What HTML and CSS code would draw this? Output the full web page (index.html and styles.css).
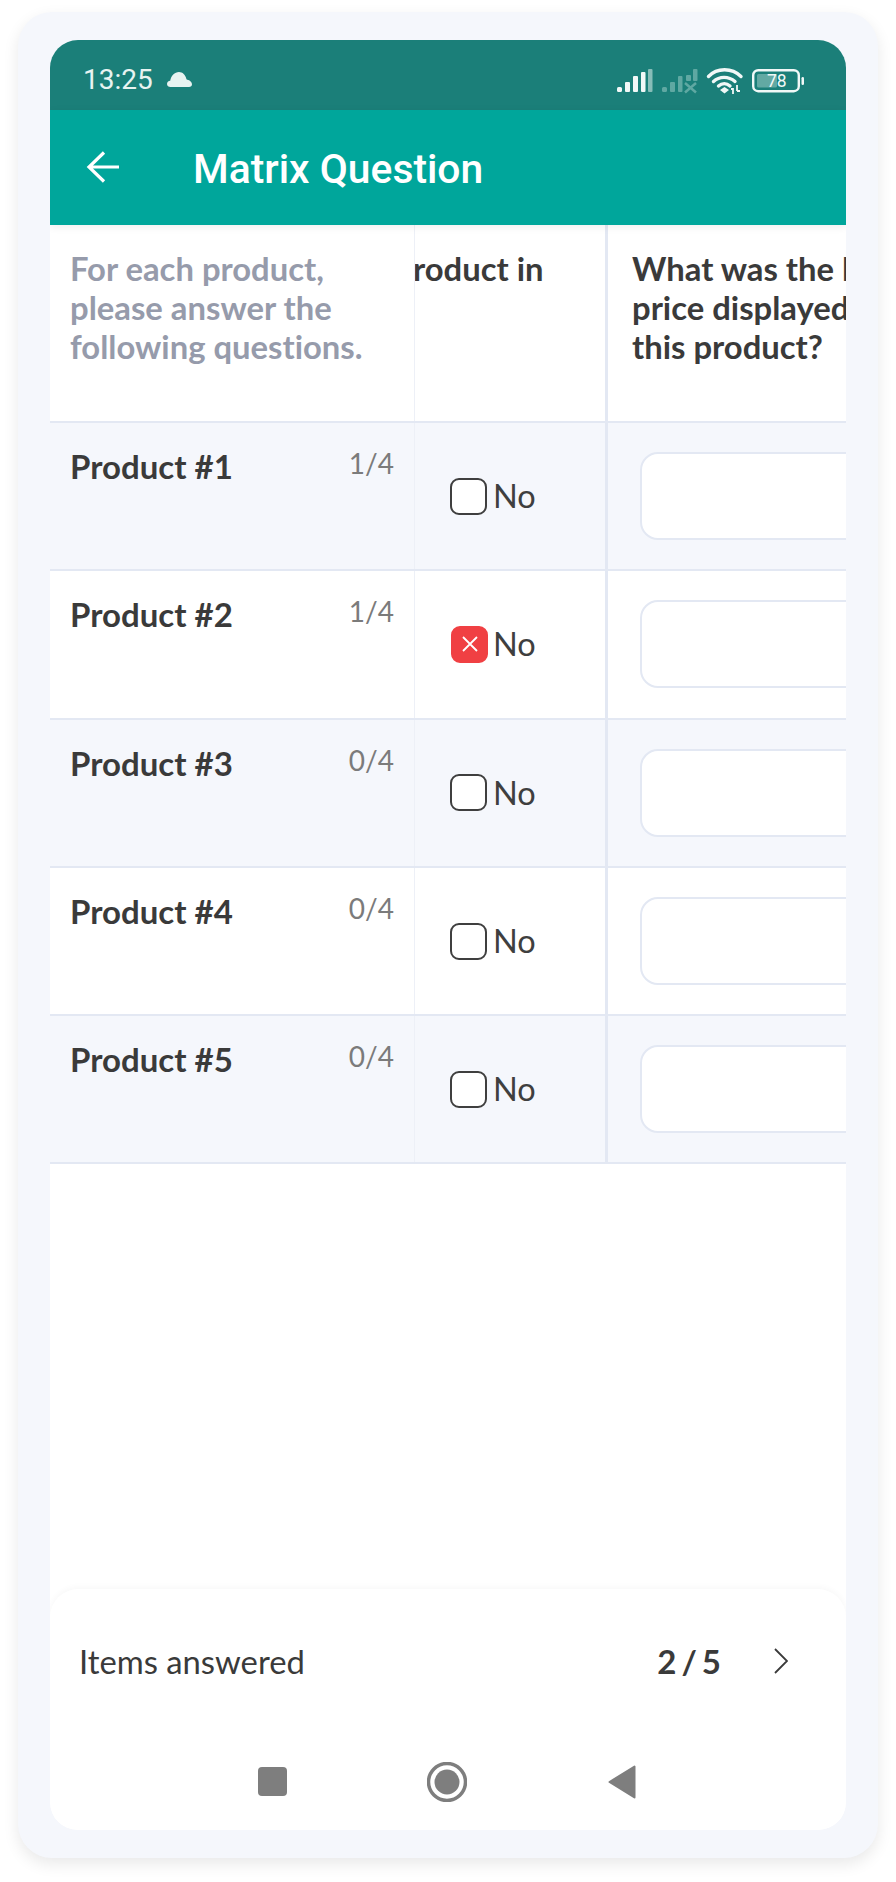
FILE: index.html
```html
<!DOCTYPE html>
<html lang="en">
<head>
<meta charset="utf-8">
<title>Matrix Question</title>
<link rel="stylesheet" href="styles.css">
</head>
<body>
<div class="phone">
  <div class="screen">
    <div class="status">
      <span class="time">13:25</span>
      <svg class="cloud" viewBox="0 0 25 15"><path d="M3.5 15C1.5 15 0 13.6 0 11.900 0 10.200 1.300 9 3.200 8.800 4 3.800 7.600 0 12 0c3.500 0 6.500 2.800 7.400 7 .1.500.4.800.9.800 2.700.3 4.700 2.800 4.700 4.400 0 1.700-1.300 2.800-3 2.800z" fill="#e8f3f1"/></svg>
      <svg class="sysicons" viewBox="0 0 187 28">
        <g fill="#f1f8f7">
          <rect x="0" y="21" width="5" height="5" rx="1.500"/><rect x="8" y="16" width="5" height="10" rx="1"/><rect x="16" y="10" width="5" height="16" rx="1"/><rect x="24" y="6" width="4.500" height="20" rx="1"/>
        </g>
        <rect x="31" y="3" width="4.500" height="23" rx="1" fill="#86bdb8"/>
        <g fill="#5fa8a2">
          <rect x="45" y="21" width="5" height="5" rx="1.500"/><rect x="53" y="16" width="5" height="10" rx="1"/><rect x="61" y="10" width="4.500" height="16" rx="1"/><rect x="69" y="9" width="5" height="6" rx="1"/><rect x="76" y="3" width="4.500" height="12" rx="1"/>
        </g>
        <path d="M68 17l11 9.500M79 17l-11 9.500" stroke="#5fa8a2" stroke-width="2.500" fill="none"/>
        <g fill="none" stroke="#f1f8f7" stroke-width="3.400" stroke-linecap="round">
          <path d="M91.500 10.500C100 1.500 115 1.500 124 10.500"/>
          <path d="M96.500 15.500c6-5.500 15-5.500 21.500 0"/>
          <path d="M101.500 20c3.500-3 8-3 11.500 0"/>
        </g>
        <path d="M103 24l4.500-3 4.500 3-4.500 3.500z" fill="#f1f8f7"/>
        <path d="M116 22v6M120 19v6M114 23h2M120 25h3" stroke="#f1f8f7" stroke-width="1.800" fill="none"/>
        <rect x="136.200" y="4.200" width="45.600" height="21" rx="5" fill="none" stroke="#f1f8f7" stroke-width="2.400"/>
        <rect x="140" y="8" width="20" height="13.500" rx="1.500" fill="#62a9a3"/>
        <text x="150" y="21" class="battery">78</text>
        <rect x="184.500" y="11" width="2.500" height="8" rx="1.200" fill="#f1f8f7"/>
      </svg>
    </div>
    <header class="appbar">
      <svg class="back" viewBox="0 0 34 32"><path d="M33 16H3M18 1.500L3 16l15 14.500" fill="none" stroke="#fff" stroke-width="3.200"/></svg>
      <h1 class="title">Matrix Question</h1>
    </header>
    <div class="matrix">
      <div class="row head">
        <div class="c1 hint">For each product,<br>please answer the<br>following questions.</div>
        <div class="c2 qclip">roduct in</div>
        <div class="c3 q">What was the lowest<br>price displayed for<br>this product?</div>
      </div>
      <div class="row alt">
        <div class="c1 product"><span class="pname">Product #1</span><span class="count">1/4</span></div>
        <div class="c2 opt"><span class="box"></span><span class="no">No</span></div>
        <div class="c3 field"><div class="input"></div></div>
      </div>
      <div class="row">
        <div class="c1 product"><span class="pname">Product #2</span><span class="count">1/4</span></div>
        <div class="c2 opt"><span class="box on"><svg viewBox="0 0 20 20"><path d="M3 3l14 14M17 3L3 17" stroke="#fff" stroke-width="1.800" fill="none"/></svg></span><span class="no">No</span></div>
        <div class="c3 field"><div class="input"></div></div>
      </div>
      <div class="row alt">
        <div class="c1 product"><span class="pname">Product #3</span><span class="count">0/4</span></div>
        <div class="c2 opt"><span class="box"></span><span class="no">No</span></div>
        <div class="c3 field"><div class="input"></div></div>
      </div>
      <div class="row">
        <div class="c1 product"><span class="pname">Product #4</span><span class="count">0/4</span></div>
        <div class="c2 opt"><span class="box"></span><span class="no">No</span></div>
        <div class="c3 field"><div class="input"></div></div>
      </div>
      <div class="row alt">
        <div class="c1 product"><span class="pname">Product #5</span><span class="count">0/4</span></div>
        <div class="c2 opt"><span class="box"></span><span class="no">No</span></div>
        <div class="c3 field"><div class="input"></div></div>
      </div>
    </div>
    <div class="spacer"></div>
    <footer class="footer">
      <div class="summary">
        <span class="label">Items answered</span>
        <span class="value">2 / 5</span>
        <svg class="chev" viewBox="0 0 14 26"><path d="M1 1l12 12L1 25" fill="none" stroke="#3a3a3a" stroke-width="1.800"/></svg>
      </div>
      <nav class="nav">
        <span class="navitem"><span class="nsquare"></span></span>
        <span class="navitem"><svg class="ncircle" viewBox="0 0 40 40"><circle cx="20" cy="20" r="18.500" fill="none" stroke="#7e7e7e" stroke-width="3.500"/><circle cx="20" cy="20" r="12.500" fill="#7e7e7e"/></svg></span>
        <span class="navitem"><svg class="ntri" viewBox="0 0 28 34"><path d="M26.500 1.500v31L1.500 17z" fill="#7e7e7e" stroke="#7e7e7e" stroke-width="2" stroke-linejoin="round"/></svg></span>
      </nav>
    </footer>
  </div>
</div>
</body>
</html>
```

FILE: styles.css
```css
* { box-sizing: border-box; }
html, body { margin: 0; padding: 0; background: #fff; }
body { width: 896px; height: 1882px; padding: 12px 18px 24px 18px; font-family: "Lato", "Liberation Sans", sans-serif; color: #3a3a3a; font-variant-ligatures: none; }
.phone { width: 860px; height: 1846px; padding: 28px 32px; background: #f5f7fc; border-radius: 34px; box-shadow: 0 6px 16px rgba(0,0,0,.09); }
.screen { width: 796px; height: 1790px; background: #fff; border-radius: 28px; overflow: hidden; display: flex; flex-direction: column; }

.status { height: 70px; flex: none; background: #1b7f79; display: flex; align-items: center; padding: 4px 0 0 33px; position: relative; }
.time { font: 400 28px "Roboto", sans-serif; color: #e8f3f1; margin-top: 5px; }
.cloud { width: 25px; height: 15px; margin-left: 14px; margin-top: 4px; }
.sysicons { width: 187px; height: 28px; margin-left: auto; margin-right: 42px; margin-top: 6px; }
.battery { font: 400 17.500px "Roboto", sans-serif; fill: #f1f8f7; }

.appbar { height: 115px; flex: none; background: #00a69b; display: flex; align-items: center; padding-left: 36px; box-shadow: 0 2px 8px rgba(0,0,0,.07); position: relative; z-index: 1; }
.back { width: 34px; height: 32px; margin-top: -2px; }
.title { margin: 3px 0 0 73px; font: 500 40.800px "Roboto", sans-serif; color: #fff; white-space: nowrap; }

.matrix { flex: none; }
.row { display: grid; grid-template-columns: 365px 193px 238px; height: 148.300px; border-bottom: 2px solid #e3e8f3; }
.row.head { height: 198px; }
.row.alt { background: #f5f7fc; }
.c1 { border-right: 1px solid #edf0f7; }
.c2 { border-right: 3px solid #e3e8f3; }
.c3 { overflow: hidden; }
.hint, .qclip, .q { font-weight: 700; font-size: 32.800px; line-height: 39px; padding-top: 24px; }
.hint { color: #969bab; padding-left: 20px; white-space: nowrap; }
.qclip { white-space: nowrap; overflow: hidden; text-indent: -2px; }
.q { white-space: nowrap; padding-left: 24px; }

.product { display: flex; justify-content: space-between; padding: 24px 20px 0 20px; }
.pname { font-weight: 700; font-size: 33px; line-height: 39px; }
.count { font-weight: 400; font-size: 28px; line-height: 36px; color: #7b7b7b; margin-top: -2px; }

.opt { display: flex; align-items: center; padding-left: 35px; gap: 6px; }
.box { width: 37px; height: 37px; flex: none; background: #fff; border: 2.500px solid #3f3f3f; border-radius: 9px; display: flex; align-items: center; justify-content: center; }
.box.on { background: #f04043; border-color: #f04043; margin-left: 1px; margin-right: -1px; }
.box.on svg { width: 20px; height: 20px; flex: none; }
.no { font-size: 32.500px; line-height: 40px; color: #3f3f3f; }

.field { display: flex; align-items: center; padding-left: 32px; }
.input { width: 400px; height: 88px; flex: none; background: #fff; border: 2.500px solid #e3e8f3; border-radius: 18px; }

.spacer { flex: 1; }

.footer { flex: none; height: 241px; border-radius: 28px 28px 0 0; background: #fff; box-shadow: 0 -2px 6px rgba(0,0,0,.03); display: flex; flex-direction: column; }
.summary { height: 144px; flex: none; display: flex; align-items: center; padding: 0 58px 0 29px; }
.label { font-size: 32.800px; color: #3a3a3a; }
.value { margin-left: auto; font-weight: 700; font-size: 33px; word-spacing: -3px; margin-right: 1px; color: #3a3a3a; }
.chev { width: 14px; height: 26px; margin-left: 52px; }
.nav { flex: 1; display: flex; justify-content: center; align-items: center; gap: 135px; padding-right: 2px; }
.navitem { width: 40px; height: 40px; display: flex; align-items: center; justify-content: center; }
.nsquare { width: 29px; height: 29px; background: #7e7e7e; border-radius: 4px; }
.ncircle { width: 40px; height: 40px; }
.ntri { width: 28px; height: 34px; flex: none; }
```
